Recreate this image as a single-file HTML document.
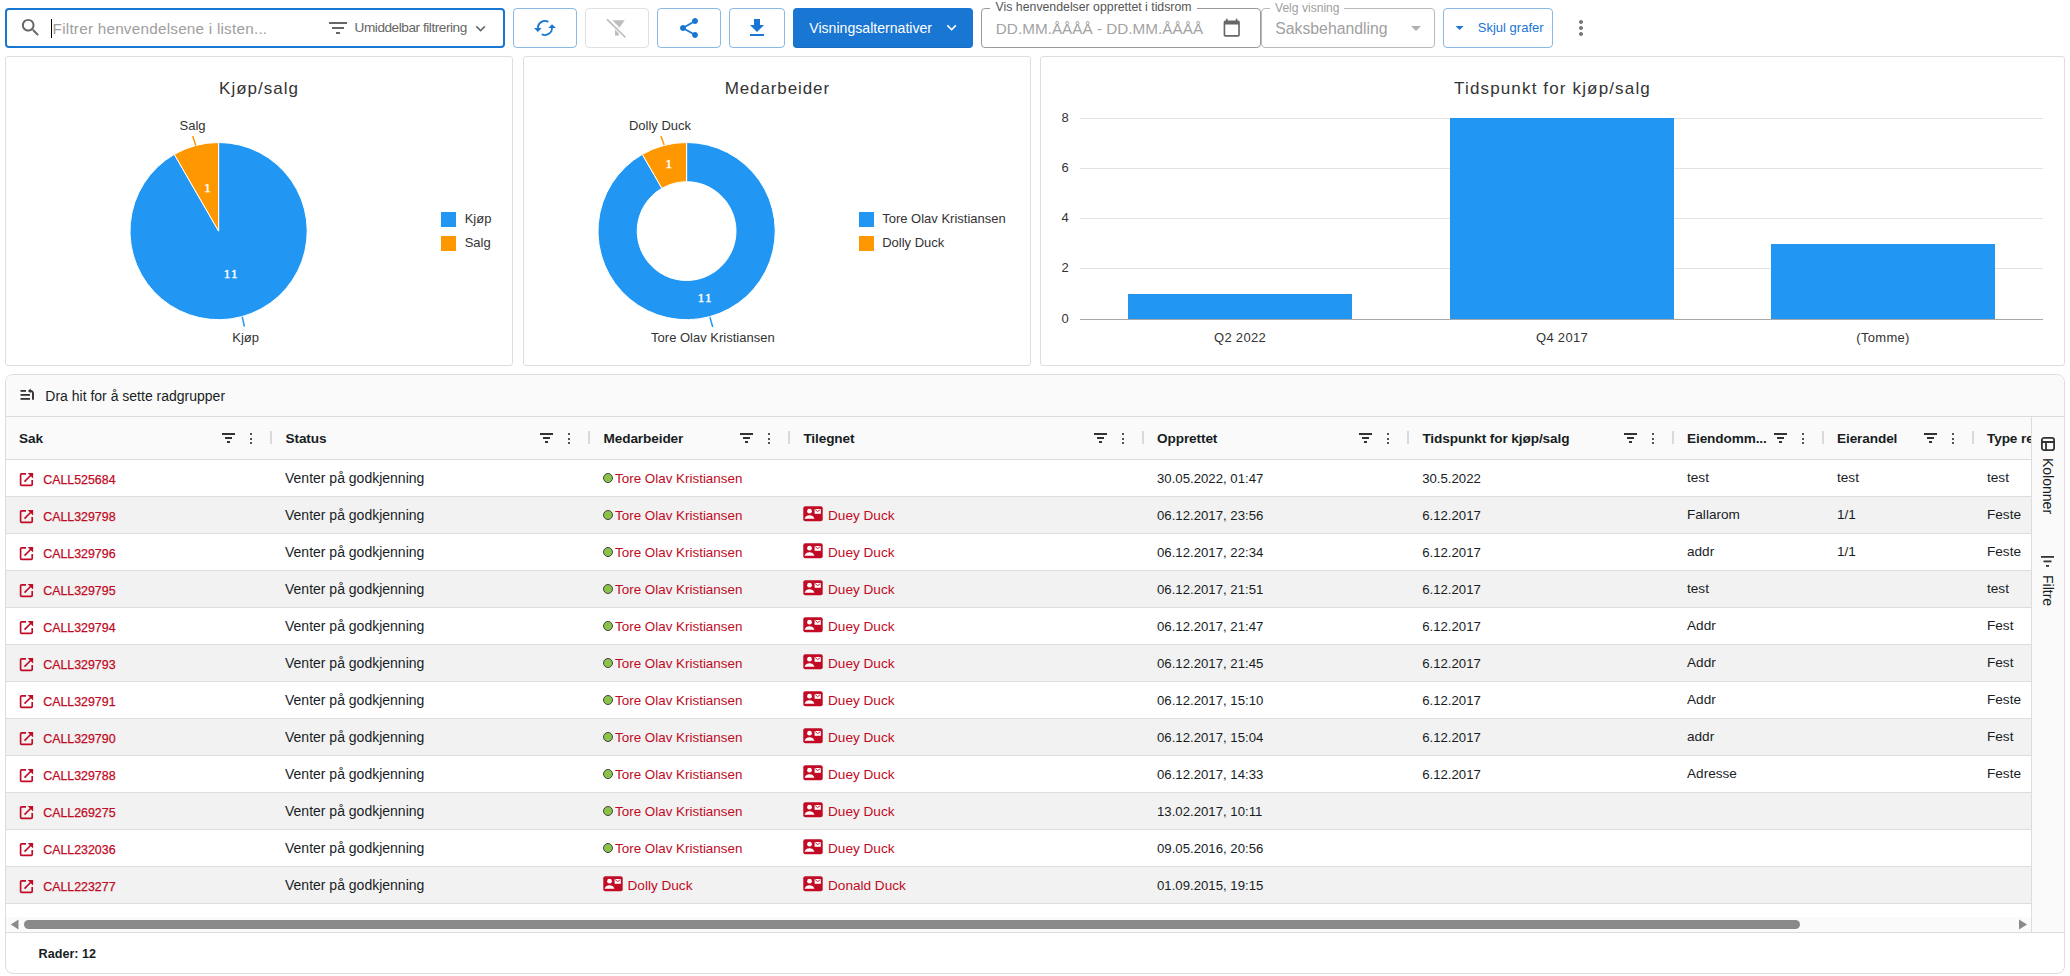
<!DOCTYPE html>
<html><head><meta charset="utf-8"><title>Henvendelser</title>
<style>
html,body{margin:0;padding:0;background:#fff;}
body{width:2070px;height:976px;overflow:hidden;position:relative;font-family:"Liberation Sans",sans-serif;}
.a{position:absolute;}
.t{position:absolute;white-space:pre;line-height:1;}
svg.a{overflow:visible;}
</style></head><body>
<div class="a" style="left:5px;top:8px;width:500px;height:40px;box-sizing:border-box;border:2px solid #1976d2;border-radius:4px;"></div>
<svg class="a" style="left:19.1px;top:16.1px;" width="23.28" height="23.28" viewBox="0 0 24 24"><path d="M15.5 14h-.79l-.28-.27C15.41 12.59 16 11.11 16 9.5 16 5.91 13.09 3 9.5 3S3 5.91 3 9.5 5.91 16 9.5 16c1.61 0 3.09-.59 4.23-1.57l.27.28v.79l5 4.99L20.49 19l-4.99-5zm-6 0C7.01 14 5 11.99 5 9.5S7.01 5 9.5 5 14 7.01 14 9.5 11.99 14 9.5 14z" fill="#666"/></svg>
<div class="a" style="left:51px;top:19px;width:1px;height:19px;background:#000;"></div>
<div class="t" style="left:52.60px;top:21.35px;font-size:15.3px;color:#9e9e9e;letter-spacing:0.22px;">Filtrer henvendelsene i listen...</div>
<svg class="a" style="left:326px;top:16px;" width="24.0" height="24.0" viewBox="0 0 24 24"><path d="M10 18h4v-2h-4v2zM3 6v2h18V6H3zm3 7h12v-2H6v2z" fill="#666"/></svg>
<div class="t" style="left:354.60px;top:20.69px;font-size:13.6px;color:#666;letter-spacing:-0.45px;">Umiddelbar filtrering</div>
<svg class="a" style="left:471.2px;top:18.6px;" width="19.200000000000003" height="19.200000000000003" viewBox="0 0 24 24"><path d="M16.59 8.59L12 13.17 7.41 8.59 6 10l6 6 6-6z" fill="#666"/></svg>
<div class="a" style="left:513px;top:8px;width:64px;height:40px;box-sizing:border-box;border:1px solid rgba(25,118,210,0.5);border-radius:4px;"></div>
<div class="a" style="left:657px;top:8px;width:64px;height:40px;box-sizing:border-box;border:1px solid rgba(25,118,210,0.5);border-radius:4px;"></div>
<div class="a" style="left:729px;top:8px;width:56px;height:40px;box-sizing:border-box;border:1px solid rgba(25,118,210,0.5);border-radius:4px;"></div>
<div class="a" style="left:585px;top:8px;width:64px;height:40px;box-sizing:border-box;border:1px solid rgba(0,0,0,0.12);border-radius:4px;"></div>
<svg class="a" style="left:530px;top:14px;" width="30" height="28" viewBox="0 0 30 28"><g fill="none" stroke="#1976d2" stroke-width="1.8"><path d="M18.33 7.84 A7 7 0 0 0 8 14.6"/><path d="M11.71 20.18 A7 7 0 0 0 22 13.4"/></g><path d="M4 14 L11.6 14 L7.9 17.9 Z" fill="#1976d2"/><path d="M18.3 14 L25.9 14 L22 10.2 Z" fill="#1976d2"/></svg>
<svg class="a" style="left:604px;top:15px;" width="26" height="26" viewBox="0 0 26 26"><path d="M8.3 5.2 L20.8 5.2 L15.5 12.4 Z" fill="#bdbdbd"/><path d="M11 12.5 L14.8 12.5 L14.8 20.6 L11 20.6 Z" fill="#bdbdbd"/><path d="M3 4.3 L21.5 22.5" stroke="#fff" stroke-width="3.4"/><path d="M3 4.3 L21.5 22.5" stroke="#bdbdbd" stroke-width="1.7"/></svg>
<svg class="a" style="left:677px;top:15.8px;" width="24.0" height="24.0" viewBox="0 0 24 24"><path d="M18 16.08c-.76 0-1.44.3-1.96.77L8.91 12.7c.05-.23.09-.46.09-.7s-.04-.47-.09-.7l7.05-4.11c.54.5 1.25.81 2.04.81 1.66 0 3-1.34 3-3s-1.34-3-3-3-3 1.34-3 3c0 .24.04.47.09.7L8.04 9.81C7.5 9.31 6.79 9 6 9c-1.66 0-3 1.34-3 3s1.34 3 3 3c.79 0 1.5-.31 2.04-.81l7.12 4.16c-.05.21-.08.43-.08.65 0 1.61 1.31 2.92 2.92 2.92 1.61 0 2.92-1.31 2.92-2.92s-1.31-2.92-2.92-2.92z" fill="#1976d2"/></svg>
<svg class="a" style="left:745px;top:16px;" width="24.0" height="24.0" viewBox="0 0 24 24"><path d="M19 9h-4V3H9v6H5l7 7 7-7zM5 18v2h14v-2H5z" fill="#1976d2"/></svg>
<div class="a" style="left:793px;top:8px;width:180px;height:40px;background:#1976d2;border-radius:4px;box-shadow:inset 0 -1px 0 rgba(0,0,0,0.08);"></div>
<div class="t" style="left:809.30px;top:20.86px;font-size:14.1px;color:#fff;">Visningsalternativer</div>
<svg class="a" style="left:941.5px;top:18.3px;" width="19.200000000000003" height="19.200000000000003" viewBox="0 0 24 24"><path d="M16.59 8.59L12 13.17 7.41 8.59 6 10l6 6 6-6z" fill="#fff"/></svg>
<div class="a" style="left:981px;top:8px;width:280px;height:40px;box-sizing:border-box;border:1px solid #9a9a9a;border-radius:4px;"></div>
<div class="a" style="left:990px;top:6px;width:207px;height:4px;background:#fff;"></div>
<div class="t" style="left:995.60px;top:1.49px;font-size:12.3px;color:#555;">Vis henvendelser opprettet i tidsrom</div>
<div class="t" style="left:995.80px;top:20.85px;font-size:15.3px;color:#a3a3a3;">DD.MM.ÅÅÅÅ - DD.MM.ÅÅÅÅ</div>
<svg class="a" style="left:1222.4px;top:18.2px;" width="19.44" height="19.44" viewBox="0 0 24 24"><path d="M20 3h-1V1h-2v2H7V1H5v2H4c-1.1 0-2 .9-2 2v16c0 1.1.9 2 2 2h16c1.1 0 2-.9 2-2V5c0-1.1-.9-2-2-2zm0 18H4V8h16v13z" fill="#666"/></svg>
<div class="a" style="left:1261px;top:8px;width:174px;height:40px;box-sizing:border-box;border:1px solid #b9b9b9;border-radius:4px;"></div>
<div class="a" style="left:1270px;top:6px;width:74px;height:4px;background:#fff;"></div>
<div class="t" style="left:1275.00px;top:1.76px;font-size:12.1px;color:#a0a0a0;">Velg visning</div>
<div class="t" style="left:1275.20px;top:20.63px;font-size:15.8px;color:#a0a0a0;">Saksbehandling</div>
<svg class="a" style="left:1404.3px;top:15.9px;" width="24.0" height="24.0" viewBox="0 0 24 24"><path d="M7 10l5 5 5-5z" fill="#b0b0b0"/></svg>
<div class="a" style="left:1443px;top:8px;width:110px;height:40px;box-sizing:border-box;border:1px solid rgba(25,118,210,0.5);border-radius:4px;"></div>
<svg class="a" style="left:1450.4px;top:17.9px;" width="19.200000000000003" height="19.200000000000003" viewBox="0 0 24 24"><path d="M7 10l5 5 5-5z" fill="#1976d2"/></svg>
<div class="t" style="left:1477.80px;top:21.00px;font-size:13px;color:#1976d2;">Skjul grafer</div>
<svg class="a" style="left:1569px;top:16px;" width="24.0" height="24.0" viewBox="0 0 24 24"><path d="M12 8c1.1 0 2-.9 2-2s-.9-2-2-2-2 .9-2 2 .9 2 2 2zm0 2c-1.1 0-2 .9-2 2s.9 2 2 2 2-.9 2-2-.9-2-2-2zm0 6c-1.1 0-2 .9-2 2s.9 2 2 2 2-.9 2-2-.9-2-2-2z" fill="#757575"/></svg>
<div class="a" style="left:5px;top:56px;width:508px;height:310px;box-sizing:border-box;border:1px solid #dedede;border-radius:3px;background:#fff;"></div>
<div class="a" style="left:523px;top:56px;width:508px;height:310px;box-sizing:border-box;border:1px solid #dedede;border-radius:3px;background:#fff;"></div>
<div class="a" style="left:1040px;top:56px;width:1025px;height:310px;box-sizing:border-box;border:1px solid #dedede;border-radius:3px;background:#fff;"></div>
<div class="t" style="left:259.00px;top:79.51px;font-size:17px;color:#333;letter-spacing:1.0px;transform:translateX(-50%);">Kjøp/salg</div>
<svg class="a" style="left:100px;top:120px;" width="240" height="230" viewBox="0 0 240 230"><path d="M118.6 111.1 L118.60 22.50 A88.6 88.6 0 1 1 74.30 34.37 Z" fill="#2196f3" stroke="#fff" stroke-width="1"/><path d="M118.6 111.1 L74.30 34.37 A88.6 88.6 0 0 1 118.60 22.50 Z" fill="#ff9800" stroke="#fff" stroke-width="1"/><path d="M92.69999999999999 16.099999999999994 L95.80000000000001 25.400000000000006" stroke="#ff9800" stroke-width="1.5"/><path d="M142.3 196.89999999999998 L144.4 206.7" stroke="#2196f3" stroke-width="1.5"/></svg>
<div class="t" style="left:192.60px;top:119.00px;font-size:13px;color:#333;transform:translateX(-50%);">Salg</div>
<div class="t" style="left:245.60px;top:330.80px;font-size:13px;color:#333;transform:translateX(-50%);">Kjøp</div>
<div class="t" style="left:207.40px;top:181.00px;font-size:13px;color:#fff;transform:translateX(-50%);font-family:'Liberation Serif',serif;-webkit-text-stroke:0.45px #fff;">1</div>
<div class="t" style="left:231.20px;top:266.70px;font-size:13px;color:#fff;letter-spacing:1.2px;transform:translateX(-50%);font-family:'Liberation Serif',serif;-webkit-text-stroke:0.45px #fff;">11</div>
<div class="a" style="left:441px;top:212px;width:15px;height:15px;background:#2196f3;"></div>
<div class="a" style="left:441px;top:236px;width:15px;height:15px;background:#ff9800;"></div>
<div class="t" style="left:464.70px;top:212.00px;font-size:13px;color:#333;">Kjøp</div>
<div class="t" style="left:464.70px;top:236.00px;font-size:13px;color:#333;">Salg</div>
<div class="t" style="left:777.30px;top:79.51px;font-size:17px;color:#333;letter-spacing:0.9px;transform:translateX(-50%);">Medarbeider</div>
<svg class="a" style="left:560px;top:120px;" width="240" height="230" viewBox="0 0 240 230"><path d="M126.60 22.50 A88.6 88.6 0 1 1 82.30 34.37 L101.90 68.32 A49.4 49.4 0 1 0 126.60 61.70 Z" fill="#2196f3" stroke="#fff" stroke-width="1"/><path d="M82.30 34.37 A88.6 88.6 0 0 1 126.60 22.50 L126.60 61.70 A49.4 49.4 0 0 0 101.90 68.32 Z" fill="#ff9800" stroke="#fff" stroke-width="1"/><path d="M100.89999999999998 15.900000000000006 L104.20000000000005 25.099999999999994" stroke="#ff9800" stroke-width="1.5"/><path d="M150 197.2 L152.70000000000005 207" stroke="#2196f3" stroke-width="1.5"/></svg>
<div class="t" style="left:660.00px;top:118.50px;font-size:13px;color:#333;transform:translateX(-50%);">Dolly Duck</div>
<div class="t" style="left:712.90px;top:330.80px;font-size:13px;color:#333;transform:translateX(-50%);">Tore Olav Kristiansen</div>
<div class="t" style="left:668.70px;top:156.70px;font-size:13px;color:#fff;transform:translateX(-50%);font-family:'Liberation Serif',serif;-webkit-text-stroke:0.45px #fff;">1</div>
<div class="t" style="left:705.30px;top:291.40px;font-size:13px;color:#fff;letter-spacing:1.2px;transform:translateX(-50%);font-family:'Liberation Serif',serif;-webkit-text-stroke:0.45px #fff;">11</div>
<div class="a" style="left:859px;top:212px;width:15px;height:15px;background:#2196f3;"></div>
<div class="a" style="left:859px;top:236px;width:15px;height:15px;background:#ff9800;"></div>
<div class="t" style="left:882.20px;top:212.00px;font-size:13px;color:#333;">Tore Olav Kristiansen</div>
<div class="t" style="left:882.20px;top:236.00px;font-size:13px;color:#333;">Dolly Duck</div>
<div class="t" style="left:1552.50px;top:79.61px;font-size:17px;color:#333;letter-spacing:1.15px;transform:translateX(-50%);">Tidspunkt for kjøp/salg</div>
<div class="a" style="left:1080px;top:118px;width:963px;height:1px;background:#e3e3e3;"></div>
<div class="t" style="left:1065.20px;top:110.60px;font-size:13px;color:#333;transform:translateX(-50%);">8</div>
<div class="a" style="left:1080px;top:168px;width:963px;height:1px;background:#e3e3e3;"></div>
<div class="t" style="left:1065.20px;top:160.60px;font-size:13px;color:#333;transform:translateX(-50%);">6</div>
<div class="a" style="left:1080px;top:218px;width:963px;height:1px;background:#e3e3e3;"></div>
<div class="t" style="left:1065.20px;top:210.60px;font-size:13px;color:#333;transform:translateX(-50%);">4</div>
<div class="a" style="left:1080px;top:268px;width:963px;height:1px;background:#e3e3e3;"></div>
<div class="t" style="left:1065.20px;top:260.60px;font-size:13px;color:#333;transform:translateX(-50%);">2</div>
<div class="t" style="left:1065.20px;top:311.60px;font-size:13px;color:#333;transform:translateX(-50%);">0</div>
<div class="a" style="left:1128px;top:294px;width:224px;height:25px;background:#2196f3;"></div>
<div class="a" style="left:1450px;top:118px;width:224px;height:201px;background:#2196f3;"></div>
<div class="a" style="left:1771px;top:244px;width:224px;height:75px;background:#2196f3;"></div>
<div class="a" style="left:1080px;top:319px;width:963px;height:1px;background:#a8a8a8;"></div>
<div class="t" style="left:1240.00px;top:331.00px;font-size:13px;color:#333;letter-spacing:0.3px;transform:translateX(-50%);">Q2 2022</div>
<div class="t" style="left:1562.00px;top:331.00px;font-size:13px;color:#333;letter-spacing:0.3px;transform:translateX(-50%);">Q4 2017</div>
<div class="t" style="left:1883.00px;top:331.00px;font-size:13px;color:#333;letter-spacing:0.3px;transform:translateX(-50%);">(Tomme)</div>
<div class="a" style="left:5px;top:374px;width:2060px;height:600px;box-sizing:border-box;border:1px solid #dddddd;border-radius:8px;background:#fff;overflow:hidden;"></div>
<div class="a" style="left:6px;top:375px;width:2058px;height:41px;background:#fafafa;border-radius:7px 7px 0 0;"></div>
<div class="a" style="left:6px;top:416px;width:2058px;height:1px;background:#dddddd;"></div>
<div class="a" style="left:6px;top:417px;width:2058px;height:42px;background:#fafafa;"></div>
<div class="a" style="left:6px;top:459px;width:2058px;height:1px;background:#dddddd;"></div>
<svg class="a" style="left:20px;top:389px;" width="16" height="12" viewBox="0 0 16 12"><g fill="#333"><rect x="0.5" y="1" width="5.5" height="1.8"/><rect x="0.5" y="5" width="9.5" height="1.8"/><rect x="0.5" y="9" width="9.5" height="1.8"/></g><path d="M13 10.8 V4.6 Q13 1.9 10.4 1.9 H10" fill="none" stroke="#333" stroke-width="1.9"/><path d="M7.9 1.9 L10.7 -0.5 L10.7 4.3 Z" fill="#333"/></svg>
<div class="t" style="left:45.30px;top:388.75px;font-size:14px;color:#181d1f;">Dra hit for å sette radgrupper</div>
<div class="t" style="left:19.00px;top:432.09px;font-size:13.6px;color:#181d1f;font-weight:700;letter-spacing:-0.1px;">Sak</div>
<div class="t" style="left:285.50px;top:432.09px;font-size:13.6px;color:#181d1f;font-weight:700;letter-spacing:-0.1px;">Status</div>
<div class="t" style="left:603.50px;top:432.09px;font-size:13.6px;color:#181d1f;font-weight:700;letter-spacing:-0.1px;">Medarbeider</div>
<div class="t" style="left:803.40px;top:432.09px;font-size:13.6px;color:#181d1f;font-weight:700;letter-spacing:-0.1px;">Tilegnet</div>
<div class="t" style="left:1157.00px;top:432.09px;font-size:13.6px;color:#181d1f;font-weight:700;letter-spacing:-0.1px;">Opprettet</div>
<div class="t" style="left:1422.40px;top:432.09px;font-size:13.6px;color:#181d1f;font-weight:700;letter-spacing:-0.1px;">Tidspunkt for kjøp/salg</div>
<div class="t" style="left:1687.00px;top:432.09px;font-size:13.6px;color:#181d1f;font-weight:700;letter-spacing:-0.1px;">Eiendomm...</div>
<div class="t" style="left:1837.00px;top:432.09px;font-size:13.6px;color:#181d1f;font-weight:700;letter-spacing:-0.1px;">Eierandel</div>
<div class="t" style="left:1987.00px;top:432.09px;font-size:13.6px;color:#181d1f;font-weight:700;letter-spacing:-0.1px;">Type re</div>
<div class="a" style="left:222px;top:433px;width:13px;height:2px;background:#333;"></div>
<div class="a" style="left:225px;top:437px;width:7px;height:2px;background:#333;"></div>
<div class="a" style="left:227px;top:441px;width:3px;height:2px;background:#333;"></div>
<div class="a" style="left:250px;top:433px;width:2.2px;height:2.2px;background:#181d1f;border-radius:50%;"></div>
<div class="a" style="left:250px;top:437.5px;width:2.2px;height:2.2px;background:#181d1f;border-radius:50%;"></div>
<div class="a" style="left:250px;top:442px;width:2.2px;height:2.2px;background:#181d1f;border-radius:50%;"></div>
<div class="a" style="left:270px;top:431px;width:2px;height:13px;background:#d9d9d9;"></div>
<div class="a" style="left:540px;top:433px;width:13px;height:2px;background:#333;"></div>
<div class="a" style="left:543px;top:437px;width:7px;height:2px;background:#333;"></div>
<div class="a" style="left:545px;top:441px;width:3px;height:2px;background:#333;"></div>
<div class="a" style="left:568px;top:433px;width:2.2px;height:2.2px;background:#181d1f;border-radius:50%;"></div>
<div class="a" style="left:568px;top:437.5px;width:2.2px;height:2.2px;background:#181d1f;border-radius:50%;"></div>
<div class="a" style="left:568px;top:442px;width:2.2px;height:2.2px;background:#181d1f;border-radius:50%;"></div>
<div class="a" style="left:588px;top:431px;width:2px;height:13px;background:#d9d9d9;"></div>
<div class="a" style="left:740px;top:433px;width:13px;height:2px;background:#333;"></div>
<div class="a" style="left:743px;top:437px;width:7px;height:2px;background:#333;"></div>
<div class="a" style="left:745px;top:441px;width:3px;height:2px;background:#333;"></div>
<div class="a" style="left:768px;top:433px;width:2.2px;height:2.2px;background:#181d1f;border-radius:50%;"></div>
<div class="a" style="left:768px;top:437.5px;width:2.2px;height:2.2px;background:#181d1f;border-radius:50%;"></div>
<div class="a" style="left:768px;top:442px;width:2.2px;height:2.2px;background:#181d1f;border-radius:50%;"></div>
<div class="a" style="left:788px;top:431px;width:2px;height:13px;background:#d9d9d9;"></div>
<div class="a" style="left:1094px;top:433px;width:13px;height:2px;background:#333;"></div>
<div class="a" style="left:1097px;top:437px;width:7px;height:2px;background:#333;"></div>
<div class="a" style="left:1099px;top:441px;width:3px;height:2px;background:#333;"></div>
<div class="a" style="left:1122px;top:433px;width:2.2px;height:2.2px;background:#181d1f;border-radius:50%;"></div>
<div class="a" style="left:1122px;top:437.5px;width:2.2px;height:2.2px;background:#181d1f;border-radius:50%;"></div>
<div class="a" style="left:1122px;top:442px;width:2.2px;height:2.2px;background:#181d1f;border-radius:50%;"></div>
<div class="a" style="left:1142px;top:431px;width:2px;height:13px;background:#d9d9d9;"></div>
<div class="a" style="left:1359px;top:433px;width:13px;height:2px;background:#333;"></div>
<div class="a" style="left:1362px;top:437px;width:7px;height:2px;background:#333;"></div>
<div class="a" style="left:1364px;top:441px;width:3px;height:2px;background:#333;"></div>
<div class="a" style="left:1387px;top:433px;width:2.2px;height:2.2px;background:#181d1f;border-radius:50%;"></div>
<div class="a" style="left:1387px;top:437.5px;width:2.2px;height:2.2px;background:#181d1f;border-radius:50%;"></div>
<div class="a" style="left:1387px;top:442px;width:2.2px;height:2.2px;background:#181d1f;border-radius:50%;"></div>
<div class="a" style="left:1407px;top:431px;width:2px;height:13px;background:#d9d9d9;"></div>
<div class="a" style="left:1624px;top:433px;width:13px;height:2px;background:#333;"></div>
<div class="a" style="left:1627px;top:437px;width:7px;height:2px;background:#333;"></div>
<div class="a" style="left:1629px;top:441px;width:3px;height:2px;background:#333;"></div>
<div class="a" style="left:1652px;top:433px;width:2.2px;height:2.2px;background:#181d1f;border-radius:50%;"></div>
<div class="a" style="left:1652px;top:437.5px;width:2.2px;height:2.2px;background:#181d1f;border-radius:50%;"></div>
<div class="a" style="left:1652px;top:442px;width:2.2px;height:2.2px;background:#181d1f;border-radius:50%;"></div>
<div class="a" style="left:1672px;top:431px;width:2px;height:13px;background:#d9d9d9;"></div>
<div class="a" style="left:1774px;top:433px;width:13px;height:2px;background:#333;"></div>
<div class="a" style="left:1777px;top:437px;width:7px;height:2px;background:#333;"></div>
<div class="a" style="left:1779px;top:441px;width:3px;height:2px;background:#333;"></div>
<div class="a" style="left:1802px;top:433px;width:2.2px;height:2.2px;background:#181d1f;border-radius:50%;"></div>
<div class="a" style="left:1802px;top:437.5px;width:2.2px;height:2.2px;background:#181d1f;border-radius:50%;"></div>
<div class="a" style="left:1802px;top:442px;width:2.2px;height:2.2px;background:#181d1f;border-radius:50%;"></div>
<div class="a" style="left:1822px;top:431px;width:2px;height:13px;background:#d9d9d9;"></div>
<div class="a" style="left:1924px;top:433px;width:13px;height:2px;background:#333;"></div>
<div class="a" style="left:1927px;top:437px;width:7px;height:2px;background:#333;"></div>
<div class="a" style="left:1929px;top:441px;width:3px;height:2px;background:#333;"></div>
<div class="a" style="left:1952px;top:433px;width:2.2px;height:2.2px;background:#181d1f;border-radius:50%;"></div>
<div class="a" style="left:1952px;top:437.5px;width:2.2px;height:2.2px;background:#181d1f;border-radius:50%;"></div>
<div class="a" style="left:1952px;top:442px;width:2.2px;height:2.2px;background:#181d1f;border-radius:50%;"></div>
<div class="a" style="left:1972px;top:431px;width:2px;height:13px;background:#d9d9d9;"></div>
<div class="a" style="left:6px;top:496px;width:2025px;height:1px;background:#dddddd;"></div>
<svg class="a" style="left:18.5px;top:471.5px;" width="15" height="15" viewBox="0 0 15 15"><path d="M7 1.8 H2.6 Q1.6 1.8 1.6 2.8 V12.4 Q1.6 13.4 2.6 13.4 H12.2 Q13.2 13.4 13.2 12.4 V8" fill="none" stroke="#c10a24" stroke-width="1.65"/><path d="M5.5 9.6 L12.6 2.5" stroke="#c10a24" stroke-width="1.65"/><path d="M8.6 0.9 H14.1 V6.4 Z" fill="#c10a24"/></svg>
<div class="t" style="left:43.20px;top:473.50px;font-size:12.4px;color:#c10a24;-webkit-text-stroke:0.25px #c10a24;">CALL525684</div>
<div class="t" style="left:285.00px;top:471.15px;font-size:14px;color:#181d1f;">Venter på godkjenning</div>
<div class="a" style="left:603px;top:473px;width:10px;height:10px;box-sizing:border-box;border:1.2px solid #444;background:#8bc34a;border-radius:50%;"></div>
<div class="t" style="left:615.10px;top:471.66px;font-size:13.4px;color:#c10a24;">Tore Olav Kristiansen</div>
<div class="t" style="left:1157.00px;top:471.83px;font-size:13.2px;color:#181d1f;">30.05.2022, 01:47</div>
<div class="t" style="left:1422.20px;top:471.83px;font-size:13.2px;color:#181d1f;">30.5.2022</div>
<div class="t" style="left:1687.00px;top:471.49px;font-size:13.6px;color:#181d1f;">test</div>
<div class="t" style="left:1837.00px;top:471.49px;font-size:13.6px;color:#181d1f;">test</div>
<div class="t" style="left:1987.00px;top:471.49px;font-size:13.6px;color:#181d1f;">test</div>
<div class="a" style="left:6px;top:497px;width:2025px;height:36px;background:#f2f2f2;"></div>
<div class="a" style="left:6px;top:533px;width:2025px;height:1px;background:#dddddd;"></div>
<svg class="a" style="left:18.5px;top:508.5px;" width="15" height="15" viewBox="0 0 15 15"><path d="M7 1.8 H2.6 Q1.6 1.8 1.6 2.8 V12.4 Q1.6 13.4 2.6 13.4 H12.2 Q13.2 13.4 13.2 12.4 V8" fill="none" stroke="#c10a24" stroke-width="1.65"/><path d="M5.5 9.6 L12.6 2.5" stroke="#c10a24" stroke-width="1.65"/><path d="M8.6 0.9 H14.1 V6.4 Z" fill="#c10a24"/></svg>
<div class="t" style="left:43.20px;top:510.50px;font-size:12.4px;color:#c10a24;-webkit-text-stroke:0.25px #c10a24;">CALL329798</div>
<div class="t" style="left:285.00px;top:508.15px;font-size:14px;color:#181d1f;">Venter på godkjenning</div>
<div class="a" style="left:603px;top:510px;width:10px;height:10px;box-sizing:border-box;border:1.2px solid #444;background:#8bc34a;border-radius:50%;"></div>
<div class="t" style="left:615.10px;top:508.66px;font-size:13.4px;color:#c10a24;">Tore Olav Kristiansen</div>
<svg class="a" style="left:803px;top:506px;" width="20" height="16" viewBox="0 0 20 16"><rect x="0.3" y="0.3" width="19.4" height="15" rx="2" fill="#c10a24"/><circle cx="6.5" cy="5.2" r="2.4" fill="#fff"/><path d="M1.6 12.8 C2.2 10.2 4.2 9.2 6.5 9.2 C8.8 9.2 10.8 10.2 11.4 12.8 Z" fill="#fff"/><rect x="11.6" y="3" width="6.2" height="4.8" fill="#fff"/><path d="M12.2 3.6 L14.7 5.6 L17.2 3.6" fill="none" stroke="#c10a24" stroke-width="0.9"/></svg>
<div class="t" style="left:828.00px;top:509.49px;font-size:13.6px;color:#c10a24;">Duey Duck</div>
<div class="t" style="left:1157.00px;top:508.83px;font-size:13.2px;color:#181d1f;">06.12.2017, 23:56</div>
<div class="t" style="left:1422.20px;top:508.83px;font-size:13.2px;color:#181d1f;">6.12.2017</div>
<div class="t" style="left:1687.00px;top:508.49px;font-size:13.6px;color:#181d1f;">Fallarom</div>
<div class="t" style="left:1837.00px;top:508.49px;font-size:13.6px;color:#181d1f;">1/1</div>
<div class="t" style="left:1987.00px;top:508.49px;font-size:13.6px;color:#181d1f;">Feste</div>
<div class="a" style="left:6px;top:570px;width:2025px;height:1px;background:#dddddd;"></div>
<svg class="a" style="left:18.5px;top:545.5px;" width="15" height="15" viewBox="0 0 15 15"><path d="M7 1.8 H2.6 Q1.6 1.8 1.6 2.8 V12.4 Q1.6 13.4 2.6 13.4 H12.2 Q13.2 13.4 13.2 12.4 V8" fill="none" stroke="#c10a24" stroke-width="1.65"/><path d="M5.5 9.6 L12.6 2.5" stroke="#c10a24" stroke-width="1.65"/><path d="M8.6 0.9 H14.1 V6.4 Z" fill="#c10a24"/></svg>
<div class="t" style="left:43.20px;top:547.50px;font-size:12.4px;color:#c10a24;-webkit-text-stroke:0.25px #c10a24;">CALL329796</div>
<div class="t" style="left:285.00px;top:545.15px;font-size:14px;color:#181d1f;">Venter på godkjenning</div>
<div class="a" style="left:603px;top:547px;width:10px;height:10px;box-sizing:border-box;border:1.2px solid #444;background:#8bc34a;border-radius:50%;"></div>
<div class="t" style="left:615.10px;top:545.66px;font-size:13.4px;color:#c10a24;">Tore Olav Kristiansen</div>
<svg class="a" style="left:803px;top:543px;" width="20" height="16" viewBox="0 0 20 16"><rect x="0.3" y="0.3" width="19.4" height="15" rx="2" fill="#c10a24"/><circle cx="6.5" cy="5.2" r="2.4" fill="#fff"/><path d="M1.6 12.8 C2.2 10.2 4.2 9.2 6.5 9.2 C8.8 9.2 10.8 10.2 11.4 12.8 Z" fill="#fff"/><rect x="11.6" y="3" width="6.2" height="4.8" fill="#fff"/><path d="M12.2 3.6 L14.7 5.6 L17.2 3.6" fill="none" stroke="#c10a24" stroke-width="0.9"/></svg>
<div class="t" style="left:828.00px;top:546.49px;font-size:13.6px;color:#c10a24;">Duey Duck</div>
<div class="t" style="left:1157.00px;top:545.83px;font-size:13.2px;color:#181d1f;">06.12.2017, 22:34</div>
<div class="t" style="left:1422.20px;top:545.83px;font-size:13.2px;color:#181d1f;">6.12.2017</div>
<div class="t" style="left:1687.00px;top:545.49px;font-size:13.6px;color:#181d1f;">addr</div>
<div class="t" style="left:1837.00px;top:545.49px;font-size:13.6px;color:#181d1f;">1/1</div>
<div class="t" style="left:1987.00px;top:545.49px;font-size:13.6px;color:#181d1f;">Feste</div>
<div class="a" style="left:6px;top:571px;width:2025px;height:36px;background:#f2f2f2;"></div>
<div class="a" style="left:6px;top:607px;width:2025px;height:1px;background:#dddddd;"></div>
<svg class="a" style="left:18.5px;top:582.5px;" width="15" height="15" viewBox="0 0 15 15"><path d="M7 1.8 H2.6 Q1.6 1.8 1.6 2.8 V12.4 Q1.6 13.4 2.6 13.4 H12.2 Q13.2 13.4 13.2 12.4 V8" fill="none" stroke="#c10a24" stroke-width="1.65"/><path d="M5.5 9.6 L12.6 2.5" stroke="#c10a24" stroke-width="1.65"/><path d="M8.6 0.9 H14.1 V6.4 Z" fill="#c10a24"/></svg>
<div class="t" style="left:43.20px;top:584.50px;font-size:12.4px;color:#c10a24;-webkit-text-stroke:0.25px #c10a24;">CALL329795</div>
<div class="t" style="left:285.00px;top:582.15px;font-size:14px;color:#181d1f;">Venter på godkjenning</div>
<div class="a" style="left:603px;top:584px;width:10px;height:10px;box-sizing:border-box;border:1.2px solid #444;background:#8bc34a;border-radius:50%;"></div>
<div class="t" style="left:615.10px;top:582.66px;font-size:13.4px;color:#c10a24;">Tore Olav Kristiansen</div>
<svg class="a" style="left:803px;top:580px;" width="20" height="16" viewBox="0 0 20 16"><rect x="0.3" y="0.3" width="19.4" height="15" rx="2" fill="#c10a24"/><circle cx="6.5" cy="5.2" r="2.4" fill="#fff"/><path d="M1.6 12.8 C2.2 10.2 4.2 9.2 6.5 9.2 C8.8 9.2 10.8 10.2 11.4 12.8 Z" fill="#fff"/><rect x="11.6" y="3" width="6.2" height="4.8" fill="#fff"/><path d="M12.2 3.6 L14.7 5.6 L17.2 3.6" fill="none" stroke="#c10a24" stroke-width="0.9"/></svg>
<div class="t" style="left:828.00px;top:583.49px;font-size:13.6px;color:#c10a24;">Duey Duck</div>
<div class="t" style="left:1157.00px;top:582.83px;font-size:13.2px;color:#181d1f;">06.12.2017, 21:51</div>
<div class="t" style="left:1422.20px;top:582.83px;font-size:13.2px;color:#181d1f;">6.12.2017</div>
<div class="t" style="left:1687.00px;top:582.49px;font-size:13.6px;color:#181d1f;">test</div>
<div class="t" style="left:1987.00px;top:582.49px;font-size:13.6px;color:#181d1f;">test</div>
<div class="a" style="left:6px;top:644px;width:2025px;height:1px;background:#dddddd;"></div>
<svg class="a" style="left:18.5px;top:619.5px;" width="15" height="15" viewBox="0 0 15 15"><path d="M7 1.8 H2.6 Q1.6 1.8 1.6 2.8 V12.4 Q1.6 13.4 2.6 13.4 H12.2 Q13.2 13.4 13.2 12.4 V8" fill="none" stroke="#c10a24" stroke-width="1.65"/><path d="M5.5 9.6 L12.6 2.5" stroke="#c10a24" stroke-width="1.65"/><path d="M8.6 0.9 H14.1 V6.4 Z" fill="#c10a24"/></svg>
<div class="t" style="left:43.20px;top:621.50px;font-size:12.4px;color:#c10a24;-webkit-text-stroke:0.25px #c10a24;">CALL329794</div>
<div class="t" style="left:285.00px;top:619.15px;font-size:14px;color:#181d1f;">Venter på godkjenning</div>
<div class="a" style="left:603px;top:621px;width:10px;height:10px;box-sizing:border-box;border:1.2px solid #444;background:#8bc34a;border-radius:50%;"></div>
<div class="t" style="left:615.10px;top:619.66px;font-size:13.4px;color:#c10a24;">Tore Olav Kristiansen</div>
<svg class="a" style="left:803px;top:617px;" width="20" height="16" viewBox="0 0 20 16"><rect x="0.3" y="0.3" width="19.4" height="15" rx="2" fill="#c10a24"/><circle cx="6.5" cy="5.2" r="2.4" fill="#fff"/><path d="M1.6 12.8 C2.2 10.2 4.2 9.2 6.5 9.2 C8.8 9.2 10.8 10.2 11.4 12.8 Z" fill="#fff"/><rect x="11.6" y="3" width="6.2" height="4.8" fill="#fff"/><path d="M12.2 3.6 L14.7 5.6 L17.2 3.6" fill="none" stroke="#c10a24" stroke-width="0.9"/></svg>
<div class="t" style="left:828.00px;top:620.49px;font-size:13.6px;color:#c10a24;">Duey Duck</div>
<div class="t" style="left:1157.00px;top:619.83px;font-size:13.2px;color:#181d1f;">06.12.2017, 21:47</div>
<div class="t" style="left:1422.20px;top:619.83px;font-size:13.2px;color:#181d1f;">6.12.2017</div>
<div class="t" style="left:1687.00px;top:619.49px;font-size:13.6px;color:#181d1f;">Addr</div>
<div class="t" style="left:1987.00px;top:619.49px;font-size:13.6px;color:#181d1f;">Fest</div>
<div class="a" style="left:6px;top:645px;width:2025px;height:36px;background:#f2f2f2;"></div>
<div class="a" style="left:6px;top:681px;width:2025px;height:1px;background:#dddddd;"></div>
<svg class="a" style="left:18.5px;top:656.5px;" width="15" height="15" viewBox="0 0 15 15"><path d="M7 1.8 H2.6 Q1.6 1.8 1.6 2.8 V12.4 Q1.6 13.4 2.6 13.4 H12.2 Q13.2 13.4 13.2 12.4 V8" fill="none" stroke="#c10a24" stroke-width="1.65"/><path d="M5.5 9.6 L12.6 2.5" stroke="#c10a24" stroke-width="1.65"/><path d="M8.6 0.9 H14.1 V6.4 Z" fill="#c10a24"/></svg>
<div class="t" style="left:43.20px;top:658.50px;font-size:12.4px;color:#c10a24;-webkit-text-stroke:0.25px #c10a24;">CALL329793</div>
<div class="t" style="left:285.00px;top:656.15px;font-size:14px;color:#181d1f;">Venter på godkjenning</div>
<div class="a" style="left:603px;top:658px;width:10px;height:10px;box-sizing:border-box;border:1.2px solid #444;background:#8bc34a;border-radius:50%;"></div>
<div class="t" style="left:615.10px;top:656.66px;font-size:13.4px;color:#c10a24;">Tore Olav Kristiansen</div>
<svg class="a" style="left:803px;top:654px;" width="20" height="16" viewBox="0 0 20 16"><rect x="0.3" y="0.3" width="19.4" height="15" rx="2" fill="#c10a24"/><circle cx="6.5" cy="5.2" r="2.4" fill="#fff"/><path d="M1.6 12.8 C2.2 10.2 4.2 9.2 6.5 9.2 C8.8 9.2 10.8 10.2 11.4 12.8 Z" fill="#fff"/><rect x="11.6" y="3" width="6.2" height="4.8" fill="#fff"/><path d="M12.2 3.6 L14.7 5.6 L17.2 3.6" fill="none" stroke="#c10a24" stroke-width="0.9"/></svg>
<div class="t" style="left:828.00px;top:657.49px;font-size:13.6px;color:#c10a24;">Duey Duck</div>
<div class="t" style="left:1157.00px;top:656.83px;font-size:13.2px;color:#181d1f;">06.12.2017, 21:45</div>
<div class="t" style="left:1422.20px;top:656.83px;font-size:13.2px;color:#181d1f;">6.12.2017</div>
<div class="t" style="left:1687.00px;top:656.49px;font-size:13.6px;color:#181d1f;">Addr</div>
<div class="t" style="left:1987.00px;top:656.49px;font-size:13.6px;color:#181d1f;">Fest</div>
<div class="a" style="left:6px;top:718px;width:2025px;height:1px;background:#dddddd;"></div>
<svg class="a" style="left:18.5px;top:693.5px;" width="15" height="15" viewBox="0 0 15 15"><path d="M7 1.8 H2.6 Q1.6 1.8 1.6 2.8 V12.4 Q1.6 13.4 2.6 13.4 H12.2 Q13.2 13.4 13.2 12.4 V8" fill="none" stroke="#c10a24" stroke-width="1.65"/><path d="M5.5 9.6 L12.6 2.5" stroke="#c10a24" stroke-width="1.65"/><path d="M8.6 0.9 H14.1 V6.4 Z" fill="#c10a24"/></svg>
<div class="t" style="left:43.20px;top:695.50px;font-size:12.4px;color:#c10a24;-webkit-text-stroke:0.25px #c10a24;">CALL329791</div>
<div class="t" style="left:285.00px;top:693.15px;font-size:14px;color:#181d1f;">Venter på godkjenning</div>
<div class="a" style="left:603px;top:695px;width:10px;height:10px;box-sizing:border-box;border:1.2px solid #444;background:#8bc34a;border-radius:50%;"></div>
<div class="t" style="left:615.10px;top:693.66px;font-size:13.4px;color:#c10a24;">Tore Olav Kristiansen</div>
<svg class="a" style="left:803px;top:691px;" width="20" height="16" viewBox="0 0 20 16"><rect x="0.3" y="0.3" width="19.4" height="15" rx="2" fill="#c10a24"/><circle cx="6.5" cy="5.2" r="2.4" fill="#fff"/><path d="M1.6 12.8 C2.2 10.2 4.2 9.2 6.5 9.2 C8.8 9.2 10.8 10.2 11.4 12.8 Z" fill="#fff"/><rect x="11.6" y="3" width="6.2" height="4.8" fill="#fff"/><path d="M12.2 3.6 L14.7 5.6 L17.2 3.6" fill="none" stroke="#c10a24" stroke-width="0.9"/></svg>
<div class="t" style="left:828.00px;top:694.49px;font-size:13.6px;color:#c10a24;">Duey Duck</div>
<div class="t" style="left:1157.00px;top:693.83px;font-size:13.2px;color:#181d1f;">06.12.2017, 15:10</div>
<div class="t" style="left:1422.20px;top:693.83px;font-size:13.2px;color:#181d1f;">6.12.2017</div>
<div class="t" style="left:1687.00px;top:693.49px;font-size:13.6px;color:#181d1f;">Addr</div>
<div class="t" style="left:1987.00px;top:693.49px;font-size:13.6px;color:#181d1f;">Feste</div>
<div class="a" style="left:6px;top:719px;width:2025px;height:36px;background:#f2f2f2;"></div>
<div class="a" style="left:6px;top:755px;width:2025px;height:1px;background:#dddddd;"></div>
<svg class="a" style="left:18.5px;top:730.5px;" width="15" height="15" viewBox="0 0 15 15"><path d="M7 1.8 H2.6 Q1.6 1.8 1.6 2.8 V12.4 Q1.6 13.4 2.6 13.4 H12.2 Q13.2 13.4 13.2 12.4 V8" fill="none" stroke="#c10a24" stroke-width="1.65"/><path d="M5.5 9.6 L12.6 2.5" stroke="#c10a24" stroke-width="1.65"/><path d="M8.6 0.9 H14.1 V6.4 Z" fill="#c10a24"/></svg>
<div class="t" style="left:43.20px;top:732.50px;font-size:12.4px;color:#c10a24;-webkit-text-stroke:0.25px #c10a24;">CALL329790</div>
<div class="t" style="left:285.00px;top:730.15px;font-size:14px;color:#181d1f;">Venter på godkjenning</div>
<div class="a" style="left:603px;top:732px;width:10px;height:10px;box-sizing:border-box;border:1.2px solid #444;background:#8bc34a;border-radius:50%;"></div>
<div class="t" style="left:615.10px;top:730.66px;font-size:13.4px;color:#c10a24;">Tore Olav Kristiansen</div>
<svg class="a" style="left:803px;top:728px;" width="20" height="16" viewBox="0 0 20 16"><rect x="0.3" y="0.3" width="19.4" height="15" rx="2" fill="#c10a24"/><circle cx="6.5" cy="5.2" r="2.4" fill="#fff"/><path d="M1.6 12.8 C2.2 10.2 4.2 9.2 6.5 9.2 C8.8 9.2 10.8 10.2 11.4 12.8 Z" fill="#fff"/><rect x="11.6" y="3" width="6.2" height="4.8" fill="#fff"/><path d="M12.2 3.6 L14.7 5.6 L17.2 3.6" fill="none" stroke="#c10a24" stroke-width="0.9"/></svg>
<div class="t" style="left:828.00px;top:731.49px;font-size:13.6px;color:#c10a24;">Duey Duck</div>
<div class="t" style="left:1157.00px;top:730.83px;font-size:13.2px;color:#181d1f;">06.12.2017, 15:04</div>
<div class="t" style="left:1422.20px;top:730.83px;font-size:13.2px;color:#181d1f;">6.12.2017</div>
<div class="t" style="left:1687.00px;top:730.49px;font-size:13.6px;color:#181d1f;">addr</div>
<div class="t" style="left:1987.00px;top:730.49px;font-size:13.6px;color:#181d1f;">Fest</div>
<div class="a" style="left:6px;top:792px;width:2025px;height:1px;background:#dddddd;"></div>
<svg class="a" style="left:18.5px;top:767.5px;" width="15" height="15" viewBox="0 0 15 15"><path d="M7 1.8 H2.6 Q1.6 1.8 1.6 2.8 V12.4 Q1.6 13.4 2.6 13.4 H12.2 Q13.2 13.4 13.2 12.4 V8" fill="none" stroke="#c10a24" stroke-width="1.65"/><path d="M5.5 9.6 L12.6 2.5" stroke="#c10a24" stroke-width="1.65"/><path d="M8.6 0.9 H14.1 V6.4 Z" fill="#c10a24"/></svg>
<div class="t" style="left:43.20px;top:769.50px;font-size:12.4px;color:#c10a24;-webkit-text-stroke:0.25px #c10a24;">CALL329788</div>
<div class="t" style="left:285.00px;top:767.15px;font-size:14px;color:#181d1f;">Venter på godkjenning</div>
<div class="a" style="left:603px;top:769px;width:10px;height:10px;box-sizing:border-box;border:1.2px solid #444;background:#8bc34a;border-radius:50%;"></div>
<div class="t" style="left:615.10px;top:767.66px;font-size:13.4px;color:#c10a24;">Tore Olav Kristiansen</div>
<svg class="a" style="left:803px;top:765px;" width="20" height="16" viewBox="0 0 20 16"><rect x="0.3" y="0.3" width="19.4" height="15" rx="2" fill="#c10a24"/><circle cx="6.5" cy="5.2" r="2.4" fill="#fff"/><path d="M1.6 12.8 C2.2 10.2 4.2 9.2 6.5 9.2 C8.8 9.2 10.8 10.2 11.4 12.8 Z" fill="#fff"/><rect x="11.6" y="3" width="6.2" height="4.8" fill="#fff"/><path d="M12.2 3.6 L14.7 5.6 L17.2 3.6" fill="none" stroke="#c10a24" stroke-width="0.9"/></svg>
<div class="t" style="left:828.00px;top:768.49px;font-size:13.6px;color:#c10a24;">Duey Duck</div>
<div class="t" style="left:1157.00px;top:767.83px;font-size:13.2px;color:#181d1f;">06.12.2017, 14:33</div>
<div class="t" style="left:1422.20px;top:767.83px;font-size:13.2px;color:#181d1f;">6.12.2017</div>
<div class="t" style="left:1687.00px;top:767.49px;font-size:13.6px;color:#181d1f;">Adresse</div>
<div class="t" style="left:1987.00px;top:767.49px;font-size:13.6px;color:#181d1f;">Feste</div>
<div class="a" style="left:6px;top:793px;width:2025px;height:36px;background:#f2f2f2;"></div>
<div class="a" style="left:6px;top:829px;width:2025px;height:1px;background:#dddddd;"></div>
<svg class="a" style="left:18.5px;top:804.5px;" width="15" height="15" viewBox="0 0 15 15"><path d="M7 1.8 H2.6 Q1.6 1.8 1.6 2.8 V12.4 Q1.6 13.4 2.6 13.4 H12.2 Q13.2 13.4 13.2 12.4 V8" fill="none" stroke="#c10a24" stroke-width="1.65"/><path d="M5.5 9.6 L12.6 2.5" stroke="#c10a24" stroke-width="1.65"/><path d="M8.6 0.9 H14.1 V6.4 Z" fill="#c10a24"/></svg>
<div class="t" style="left:43.20px;top:806.50px;font-size:12.4px;color:#c10a24;-webkit-text-stroke:0.25px #c10a24;">CALL269275</div>
<div class="t" style="left:285.00px;top:804.15px;font-size:14px;color:#181d1f;">Venter på godkjenning</div>
<div class="a" style="left:603px;top:806px;width:10px;height:10px;box-sizing:border-box;border:1.2px solid #444;background:#8bc34a;border-radius:50%;"></div>
<div class="t" style="left:615.10px;top:804.66px;font-size:13.4px;color:#c10a24;">Tore Olav Kristiansen</div>
<svg class="a" style="left:803px;top:802px;" width="20" height="16" viewBox="0 0 20 16"><rect x="0.3" y="0.3" width="19.4" height="15" rx="2" fill="#c10a24"/><circle cx="6.5" cy="5.2" r="2.4" fill="#fff"/><path d="M1.6 12.8 C2.2 10.2 4.2 9.2 6.5 9.2 C8.8 9.2 10.8 10.2 11.4 12.8 Z" fill="#fff"/><rect x="11.6" y="3" width="6.2" height="4.8" fill="#fff"/><path d="M12.2 3.6 L14.7 5.6 L17.2 3.6" fill="none" stroke="#c10a24" stroke-width="0.9"/></svg>
<div class="t" style="left:828.00px;top:805.49px;font-size:13.6px;color:#c10a24;">Duey Duck</div>
<div class="t" style="left:1157.00px;top:804.83px;font-size:13.2px;color:#181d1f;">13.02.2017, 10:11</div>
<div class="a" style="left:6px;top:866px;width:2025px;height:1px;background:#dddddd;"></div>
<svg class="a" style="left:18.5px;top:841.5px;" width="15" height="15" viewBox="0 0 15 15"><path d="M7 1.8 H2.6 Q1.6 1.8 1.6 2.8 V12.4 Q1.6 13.4 2.6 13.4 H12.2 Q13.2 13.4 13.2 12.4 V8" fill="none" stroke="#c10a24" stroke-width="1.65"/><path d="M5.5 9.6 L12.6 2.5" stroke="#c10a24" stroke-width="1.65"/><path d="M8.6 0.9 H14.1 V6.4 Z" fill="#c10a24"/></svg>
<div class="t" style="left:43.20px;top:843.50px;font-size:12.4px;color:#c10a24;-webkit-text-stroke:0.25px #c10a24;">CALL232036</div>
<div class="t" style="left:285.00px;top:841.15px;font-size:14px;color:#181d1f;">Venter på godkjenning</div>
<div class="a" style="left:603px;top:843px;width:10px;height:10px;box-sizing:border-box;border:1.2px solid #444;background:#8bc34a;border-radius:50%;"></div>
<div class="t" style="left:615.10px;top:841.66px;font-size:13.4px;color:#c10a24;">Tore Olav Kristiansen</div>
<svg class="a" style="left:803px;top:839px;" width="20" height="16" viewBox="0 0 20 16"><rect x="0.3" y="0.3" width="19.4" height="15" rx="2" fill="#c10a24"/><circle cx="6.5" cy="5.2" r="2.4" fill="#fff"/><path d="M1.6 12.8 C2.2 10.2 4.2 9.2 6.5 9.2 C8.8 9.2 10.8 10.2 11.4 12.8 Z" fill="#fff"/><rect x="11.6" y="3" width="6.2" height="4.8" fill="#fff"/><path d="M12.2 3.6 L14.7 5.6 L17.2 3.6" fill="none" stroke="#c10a24" stroke-width="0.9"/></svg>
<div class="t" style="left:828.00px;top:842.49px;font-size:13.6px;color:#c10a24;">Duey Duck</div>
<div class="t" style="left:1157.00px;top:841.83px;font-size:13.2px;color:#181d1f;">09.05.2016, 20:56</div>
<div class="a" style="left:6px;top:867px;width:2025px;height:36px;background:#f2f2f2;"></div>
<div class="a" style="left:6px;top:903px;width:2025px;height:1px;background:#dddddd;"></div>
<svg class="a" style="left:18.5px;top:878.5px;" width="15" height="15" viewBox="0 0 15 15"><path d="M7 1.8 H2.6 Q1.6 1.8 1.6 2.8 V12.4 Q1.6 13.4 2.6 13.4 H12.2 Q13.2 13.4 13.2 12.4 V8" fill="none" stroke="#c10a24" stroke-width="1.65"/><path d="M5.5 9.6 L12.6 2.5" stroke="#c10a24" stroke-width="1.65"/><path d="M8.6 0.9 H14.1 V6.4 Z" fill="#c10a24"/></svg>
<div class="t" style="left:43.20px;top:880.50px;font-size:12.4px;color:#c10a24;-webkit-text-stroke:0.25px #c10a24;">CALL223277</div>
<div class="t" style="left:285.00px;top:878.15px;font-size:14px;color:#181d1f;">Venter på godkjenning</div>
<svg class="a" style="left:603px;top:876px;" width="20" height="16" viewBox="0 0 20 16"><rect x="0.3" y="0.3" width="19.4" height="15" rx="2" fill="#c10a24"/><circle cx="6.5" cy="5.2" r="2.4" fill="#fff"/><path d="M1.6 12.8 C2.2 10.2 4.2 9.2 6.5 9.2 C8.8 9.2 10.8 10.2 11.4 12.8 Z" fill="#fff"/><rect x="11.6" y="3" width="6.2" height="4.8" fill="#fff"/><path d="M12.2 3.6 L14.7 5.6 L17.2 3.6" fill="none" stroke="#c10a24" stroke-width="0.9"/></svg>
<div class="t" style="left:627.50px;top:879.49px;font-size:13.6px;color:#c10a24;">Dolly Duck</div>
<svg class="a" style="left:803px;top:876px;" width="20" height="16" viewBox="0 0 20 16"><rect x="0.3" y="0.3" width="19.4" height="15" rx="2" fill="#c10a24"/><circle cx="6.5" cy="5.2" r="2.4" fill="#fff"/><path d="M1.6 12.8 C2.2 10.2 4.2 9.2 6.5 9.2 C8.8 9.2 10.8 10.2 11.4 12.8 Z" fill="#fff"/><rect x="11.6" y="3" width="6.2" height="4.8" fill="#fff"/><path d="M12.2 3.6 L14.7 5.6 L17.2 3.6" fill="none" stroke="#c10a24" stroke-width="0.9"/></svg>
<div class="t" style="left:828.00px;top:879.49px;font-size:13.6px;color:#c10a24;">Donald Duck</div>
<div class="t" style="left:1157.00px;top:878.83px;font-size:13.2px;color:#181d1f;">01.09.2015, 19:15</div>
<div class="a" style="left:2031px;top:417px;width:33px;height:515px;background:#fafafa;border-left:1px solid #dddddd;box-sizing:border-box;"></div>
<svg class="a" style="left:2041px;top:437px;" width="14" height="14" viewBox="0 0 14 14"><rect x="0.9" y="0.9" width="12.2" height="12.2" rx="2.2" fill="none" stroke="#333" stroke-width="1.8"/><path d="M1 5 H13 M5 5 V13" stroke="#333" stroke-width="1.8"/></svg>
<div class="t" style="left:2055px;top:458px;font-size:14px;color:#181d1f;transform-origin:0 0;transform:rotate(90deg);">Kolonner</div>
<svg class="a" style="left:2041px;top:555px;" width="14" height="13" viewBox="0 0 14 13"><rect x="0" y="1" width="13" height="1.8" fill="#333"/><rect x="2.5" y="5.5" width="8" height="1.8" fill="#333"/><rect x="5" y="10" width="3" height="1.8" fill="#333"/></svg>
<div class="t" style="left:2055px;top:575px;font-size:14px;color:#181d1f;transform-origin:0 0;transform:rotate(90deg);">Filtre</div>
<div class="a" style="left:6px;top:917px;width:2025px;height:15px;background:#fafafa;"></div>
<svg class="a" style="left:10px;top:919px;" width="9" height="11" viewBox="0 0 9 11"><path d="M8.5 0.5 L8.5 10.5 L0.8 5.5 Z" fill="#8a8a8a"/></svg>
<div class="a" style="left:24px;top:920px;width:1776px;height:9px;background:#8a8a8a;border-radius:5px;"></div>
<svg class="a" style="left:2018px;top:919px;" width="10" height="11" viewBox="0 0 10 11"><path d="M1 0.5 L1 10.5 L9 5.5 Z" fill="#8a8a8a"/></svg>
<div class="a" style="left:6px;top:932px;width:2058px;height:1px;background:#dddddd;"></div>
<div class="t" style="left:38.60px;top:948.13px;font-size:12.6px;color:#181d1f;font-weight:700;">Rader: 12</div>
</body></html>
